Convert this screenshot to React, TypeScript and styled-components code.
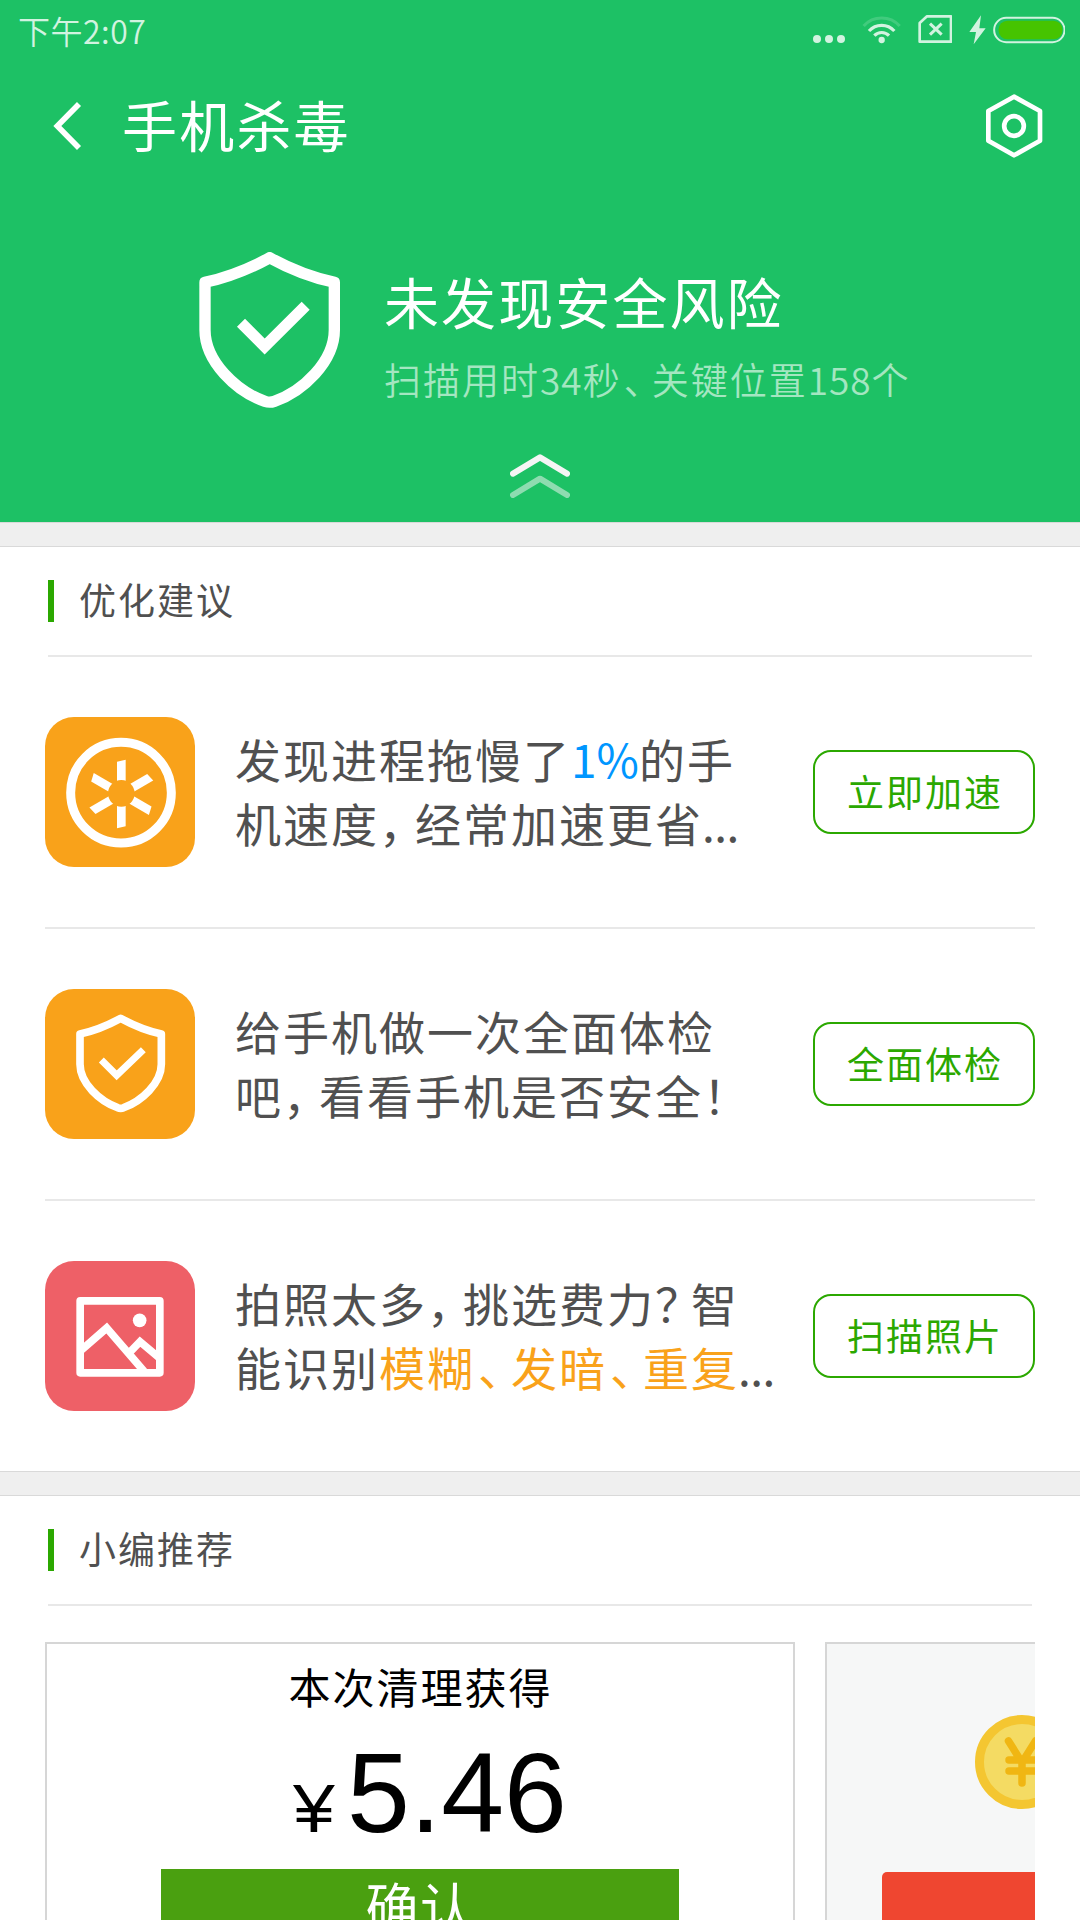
import React from "react";
import styled, { createGlobalStyle } from "styled-components";

const GlobalStyle = createGlobalStyle`
  * { box-sizing: border-box; }
  body {
    margin: 0;
    background: #fff;
    font-family: "Noto Sans CJK SC", "Noto Sans", sans-serif;
    font-weight: 400;
  }
`;

const Screen = styled.div`
  width: 1080px;
  height: 1920px;
  overflow: hidden;
  display: flex;
  flex-direction: column;
  background: #fff;
`;

const Header = styled.header`
  flex: none;
  height: 522px;
  display: flex;
  flex-direction: column;
  background: #1dc165;
  color: #fff;
`;

const StatusBar = styled.div`
  height: 60px;
  display: flex;
  align-items: center;
  padding: 0 14.67px 0 18px;
  color: #d2f3e0;
`;

const Clock = styled.span`
  flex: 1;
  font-size: 32px;
  font-weight: 350;
  letter-spacing: 0.5px;
  line-height: 56px;
  padding-bottom: 1px;
`;

const StatusIcon = styled.svg<{ $w: number; $gap?: number }>`
  flex: none;
  display: block;
  width: ${(p) => p.$w / 3}px;
  height: 30px;
  margin-left: ${(p) => (p.$gap ?? 0) / 3}px;
`;

const TitleBar = styled.div`
  height: 132px;
  display: flex;
  align-items: center;
  padding: 0 36px 0 52px;
`;

const BackIcon = styled.svg`
  width: 32px;
  height: 50px;
`;

const Title = styled.h1`
  flex: 1;
  margin: 0 0 6px 38px;
  font-size: 55px;
  line-height: 80px;
  font-weight: 400;
  letter-spacing: 2.2px;
`;

const SettingsIcon = styled.svg`
  width: 60px;
  height: 66px;
`;

const Hero = styled.div`
  display: flex;
  padding: 60px 0 0 199px;
  height: 216px;
`;

const HeroShield = styled.svg`
  width: 141px;
  height: 156px;
  flex: none;
`;

const HeroText = styled.div`
  display: flex;
  flex-direction: column;
  margin-left: 44px;
  padding-top: 8px;
  white-space: nowrap;
`;

const HeroTitle = styled.div`
  font-size: 55px;
  line-height: 80px;
  letter-spacing: 2.1px;
`;

const HeroSub = styled.div`
  font-size: 37px;
  line-height: 54px;
  font-weight: 350;
  letter-spacing: 2px;
  margin-top: 12px;
  color: #a4e6c1;
`;

const Digits = styled.span`
  letter-spacing: 1px;
`;

const Chevrons = styled.svg`
  align-self: center;
  width: 60px;
  height: 44px;
  margin-top: 46px;
`;

const Gap = styled.div`
  flex: none;
  height: 25px;
  background: #efefef;
  border-top: 1px solid #d9d9d9;
  border-bottom: 1px solid #d9d9d9;
`;

const Section = styled.section`
  flex: none;
  display: flex;
  flex-direction: column;
  padding: 0 45px;
`;

const SectionHead = styled.div`
  height: 110px;
  margin: 0 3px;
  padding-bottom: 1px;
  border-bottom: 2px solid #e8e8e8;
  display: flex;
  align-items: center;
`;

const Marker = styled.i`
  width: 6px;
  height: 42px;
  background: #2ba800;
`;

const SectionTitle = styled.h2`
  margin: 0 0 3px 25px;
  font-size: 37px;
  line-height: 54px;
  font-weight: 400;
  letter-spacing: 2px;
  color: #505050;
`;

const Row = styled.div`
  height: 272px;
  padding: 60px 0;
  border-bottom: 2px solid #e8e8e8;
  display: flex;
  align-items: center;
  &:last-child {
    height: 270px;
    border-bottom: none;
  }
`;

const Tile = styled.svg<{ $bg: string }>`
  flex: none;
  width: 150px;
  height: 150px;
  border-radius: 29px;
  background: ${(p) => p.$bg};
`;

const Message = styled.div`
  flex: 1;
  margin: -4px 0 0 40px;
  font-size: 46px;
  line-height: 64px;
  letter-spacing: 2px;
  white-space: nowrap;
  color: #505050;
`;

const Line = styled.div`
  display: flex;
`;

const Accent = styled.span<{ $color: string; $tight?: boolean }>`
  color: ${(p) => p.$color};
  letter-spacing: ${(p) => (p.$tight ? "0" : "inherit")};
`;

const Punct = styled.span<{ $w: number; $shift?: number }>`
  display: inline-block;
  width: ${(p) => p.$w}px;
  padding-left: ${(p) => p.$shift ?? 0}px;
  letter-spacing: 0;
  font-feature-settings: "halt";
`;

const Dots = styled.span`
  margin-left: -1px;
  letter-spacing: -0.5px;
`;

const ActionButton = styled.button`
  flex: none;
  width: 222px;
  height: 84px;
  padding: 0 0 2px 2px;
  border: 2px solid #2ba800;
  border-radius: 18px;
  background: #fff;
  color: #2ba800;
  font: inherit;
  font-size: 37px;
  line-height: 54px;
  letter-spacing: 2px;
`;

const Cards = styled.div`
  margin-top: 36px;
  height: 290px;
  display: flex;
  gap: 30px;
  overflow: hidden;
`;

const Card = styled.div<{ $bg: string }>`
  flex: none;
  width: 750px;
  height: 400px;
  border: 2px solid #d6d6d6;
  background: ${(p) => p.$bg};
  display: flex;
  flex-direction: column;
`;

const CardTitle = styled.div`
  align-self: center;
  margin: 11px 0 0 1px;
  font-size: 42px;
  line-height: 62px;
  letter-spacing: 2px;
  color: #000;
`;

const Amount = styled.div`
  display: flex;
  align-items: baseline;
  margin: 8px 0 0 246px;
  height: 144px;
  font-family: "Liberation Sans", Arial, sans-serif;
  font-size: 113px;
  line-height: 136px;
  color: #000;
`;

const Currency = styled.span`
  font-size: 69px;
  line-height: 1;
  width: 54px;
  transform: scaleX(1.09);
  transform-origin: left;
`;

const ConfirmButton = styled.div`
  margin-left: 114px;
  width: 518px;
  height: 100px;
  background: #4aa010;
  color: #fff;
  text-align: center;
  font-size: 53px;
  line-height: 72px;
  letter-spacing: 1.5px;
`;

const Coin = styled.svg`
  flex: none;
  width: 94px;
  height: 94px;
  margin: 71px 0 0 148px;
`;

const RedButton = styled.div`
  margin: 63px 0 0 55px;
  width: 560px;
  height: 100px;
  border-radius: 5px;
  background: #ef4630;
`;

export default function App() {
  return (
    <Screen>
      <GlobalStyle />
      <Header>
        <StatusBar>
          <Clock>下午2:07</Clock>
          <StatusIcon $w={96} viewBox="99 45 96 90" fill="currentColor">
            <circle cx="111" cy="117" r="12" />
            <circle cx="147" cy="117" r="12" />
            <circle cx="183" cy="117" r="12" />
          </StatusIcon>
          <StatusIcon $w={117} $gap={52} viewBox="247 45 117 90" fill="none" stroke="currentColor" strokeWidth="9.5">
            <path d="M252 78A73 73 0 0 1 360 78" opacity=".2" />
            <path d="M268 93A51 51 0 0 1 344 93" />
            <path d="M284 107A30 30 0 0 1 328 107" />
            <circle cx="306" cy="120" r="9.500" fill="currentColor" stroke="none" />
          </StatusIcon>
          <StatusIcon $w={104} $gap={49} viewBox="413 45 104 90" fill="none" stroke="currentColor" strokeWidth="8">
            <path d="M440 49H512V125H418V69Z" strokeLinejoin="round" />
            <path d="M449 71L484 104M484 71L449 104" strokeWidth="9" />
          </StatusIcon>
          <StatusIcon $w={52} $gap={49} viewBox="566 45 52 90" fill="currentColor">
            <path d="M602 46L567 96H587L580 133L616 85H597Z" />
          </StatusIcon>
          <StatusIcon $w={218} $gap={20} viewBox="638 45 218 90">
            <rect x="641.5" y="53.5" width="211" height="73" rx="36" fill="none" stroke="currentColor" strokeWidth="6" />
            <rect x="655" y="62" width="191" height="56" rx="26" fill="#46c400" />
          </StatusIcon>
        </StatusBar>
        <TitleBar>
          <BackIcon viewBox="156 303 96 150" fill="none" stroke="#fff" strokeWidth="17">
            <path d="M237 312L172 378L237 444" />
          </BackIcon>
          <Title>手机杀毒</Title>
          <SettingsIcon viewBox="611 279 180 198" fill="none" stroke="#fff" strokeWidth="14" strokeLinejoin="round">
            <path d="M701 290L779 333V422L701 466L624 422V333Z" />
            <circle cx="701" cy="378" r="29.500" />
          </SettingsIcon>
        </TitleBar>
        <Hero>
          <HeroShield viewBox="57 66 423 468" fill="none" stroke="#fff" strokeWidth="34">
            <path
              d="M269 83Q175 135 75 157V300C75 395 170 485 255 514Q269 519 283 514C368 485 463 395 463 300V157Q363 135 269 83Z"
              strokeLinejoin="round"
            />
            <path d="M183 278L254 349.5L377 227" />
          </HeroShield>
          <HeroText>
            <HeroTitle>未发现安全风险</HeroTitle>
            <HeroSub>
              扫描用时<Digits>34</Digits>秒
              <Punct $w={30} $shift={2}>
                、
              </Punct>
              关键位置<Digits>158</Digits>个
            </HeroSub>
          </HeroText>
        </Hero>
        <Chevrons viewBox="990 672 180 132" fill="none" strokeWidth="18" strokeLinecap="round" strokeLinejoin="round">
          <path d="M999 731L1080 682L1161 731" stroke="#f5f5f5" />
          <path d="M999 795L1080 746L1161 795" stroke="#8edcb0" />
        </Chevrons>
      </Header>

      <Gap />

      <Section>
        <SectionHead>
          <Marker />
          <SectionTitle>优化建议</SectionTitle>
        </SectionHead>
        <div>
          <Row>
            <Tile $bg="#f9a21a" viewBox="135 621 450 450">
              <circle cx="363" cy="848" r="151" fill="none" stroke="#fff" strokeWidth="27" />
              {[0, 60, 120, 180, 240, 300].map((angle) => (
                <path
                  key={angle}
                  d="M-13 -97L13 -103V-30H-13Z"
                  fill="#fff"
                  transform={`translate(364 852) rotate(${angle})`}
                />
              ))}
              <circle cx="364" cy="850" r="40" fill="#f9a21a" />
            </Tile>
            <Message>
              <Line>
                发现进程拖慢了<Accent $color="#0096ff" $tight>1%</Accent>的手
              </Line>
              <Line>
                机速度<Punct $w={36}>，</Punct>经常加速更省<Dots>...</Dots>
              </Line>
            </Message>
            <ActionButton>立即加速</ActionButton>
          </Row>
          <Row>
            <Tile $bg="#f9a21a" viewBox="135 87 450 450" fill="none" stroke="#fff">
              <path
                d="M362 175Q300 209 240 222V313C240 370 300 424 353 443Q362 447 371 443C424 424 484 370 484 313V222Q424 209 362 175Z"
                strokeWidth="23"
                strokeLinejoin="round"
              />
              <path d="M304 300L350 346L430 269" strokeWidth="21" />
            </Tile>
            <Message>
              <Line>给手机做一次全面体检</Line>
              <Line>
                吧<Punct $w={36}>，</Punct>看看手机是否安全<Punct $w={36}>！</Punct>
              </Line>
            </Message>
            <ActionButton>全面体检</ActionButton>
          </Row>
          <Row>
            <Tile $bg="#ee6067" viewBox="135 903 450 450" fill="none" stroke="#fff" strokeWidth="23">
              <rect x="240.500" y="1022.500" width="239" height="216" strokeLinejoin="round" />
              <path d="M243 1171L320 1104L432 1234" />
              <path d="M392 1174L420 1145L477 1193" />
              <circle cx="419" cy="1081" r="20.500" fill="#fff" stroke="none" />
            </Tile>
            <Message>
              <Line>
                拍照太多<Punct $w={36}>，</Punct>挑选费力<Punct $w={36}>？</Punct>智
              </Line>
              <Line>
                能识别
                <Accent $color="#f9a21a">
                  模糊
                  <Punct $w={36} $shift={3}>
                    、
                  </Punct>
                  发暗
                  <Punct $w={36} $shift={3}>
                    、
                  </Punct>
                  重复
                </Accent>
                <Dots>...</Dots>
              </Line>
            </Message>
            <ActionButton>扫描照片</ActionButton>
          </Row>
        </div>
      </Section>

      <Gap />

      <Section>
        <SectionHead>
          <Marker />
          <SectionTitle>小编推荐</SectionTitle>
        </SectionHead>
        <Cards>
          <Card $bg="#fff">
            <CardTitle>本次清理获得</CardTitle>
            <Amount>
              <Currency>¥</Currency>5.46
            </Amount>
            <ConfirmButton>确认</ConfirmButton>
          </Card>
          <Card $bg="#f6f7f7">
            <Coin viewBox="0 0 94 94">
              <circle cx="47" cy="47" r="42.500" fill="#f4db63" stroke="#f4c631" strokeWidth="9" />
              <path
                d="M33.500 26L47 47.500L60.500 26M34 45H60M34 56H60M47 46V68"
                fill="none"
                stroke="#f0b613"
                strokeWidth="7.500"
                strokeLinecap="round"
              />
            </Coin>
            <RedButton />
          </Card>
        </Cards>
      </Section>
    </Screen>
  );
}
